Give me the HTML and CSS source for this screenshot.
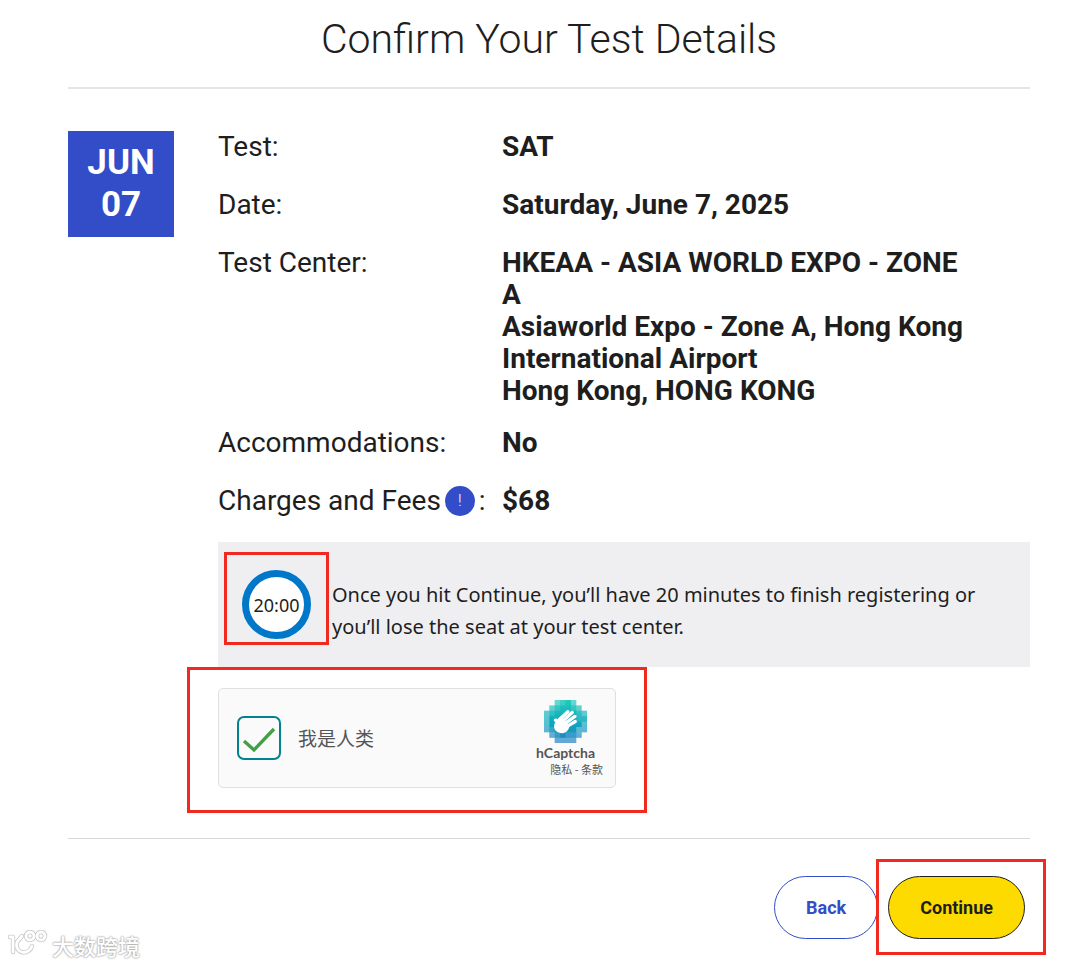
FILE: index.html
```html
<!DOCTYPE html>
<html lang="en">
<head>
<meta charset="utf-8">
<meta name="viewport" content="width=device-width, initial-scale=1">
<title>Confirm Your Test Details</title>
<link rel="stylesheet" href="styles.css">
</head>
<body>
<main class="page">
  <h1 class="title">Confirm Your Test Details</h1>
  <div class="summary">
    <div class="date"><span>JUN</span><span>07</span></div>
    <div class="content">
      <dl class="details">
        <div class="row"><dt>Test:</dt><dd>SAT</dd></div>
        <div class="row"><dt>Date:</dt><dd>Saturday, June 7, 2025</dd></div>
        <div class="row"><dt>Test Center:</dt><dd>HKEAA - ASIA WORLD EXPO - ZONE A<br>Asiaworld Expo - Zone A, Hong Kong International Airport<br>Hong Kong, HONG KONG</dd></div>
        <div class="row"><dt>Accommodations:</dt><dd>No</dd></div>
        <div class="row"><dt class="fees">Charges and Fees <button class="info" type="button" aria-label="About charges and fees">!</button> :</dt><dd>$68</dd></div>
      </dl>
      <div class="notice">
        <div class="timer"><span class="ring">20:00</span><span class="mark mark-timer"></span></div>
        <p class="notice-text">Once you hit Continue, you’ll have 20 minutes to finish registering or you’ll lose the seat at your test center.</p>
      </div>
      <div class="captcha">
        <label class="human">
          <span class="tick">
            <input class="tick-input" type="checkbox" checked>
            <svg class="tick-icon" viewBox="0 0 44 44" aria-hidden="true"><path d="M7 25l10 9L37 13" fill="none" stroke="#43a047" stroke-width="3.4"/></svg>
          </span>
          我是人类
        </label>
        <div class="brand">
          <svg class="brand-logo" viewBox="0 0 128 128" aria-hidden="true">
            <defs><linearGradient id="sea" x1="0" y1="0" x2="0" y2="1"><stop offset="0" stop-color="#22cbb9"/><stop offset=".5" stop-color="#10a9bd"/><stop offset="1" stop-color="#247fc5"/></linearGradient></defs>
            <path fill="url(#sea)" d="M32 0h64v16h16v16h16v64h-16v16H96v16H32v-16H16V96H0V32h16V16h16z"/>
            <path fill="#fff" opacity=".3" d="M32 0h16v16H32zM80 0h16v16H80zM16 16h16v16H16zM96 16h16v16H96zM0 32h16v32H0zM112 32h16v16h-16zM0 64h16v32H0zM112 64h16v32h-16zM16 96h16v16H16zM96 80h16v32H96zM32 112h64v16H32z"/>
            <path fill="#fff" opacity=".12" d="M48 0h16v16H48zM32 16h16v16H32zM80 16h16v16H80zM16 32h16v16H16zM96 32h16v32H96zM16 80h16v16H16zM32 96h16v16H32zM64 96h32v16H64zM112 48h16v16h-16z"/>
            <g fill="none" stroke="#fff" stroke-width="10" stroke-linecap="round"><path d="M46 58L71 35"/><path d="M52 66L84 37"/><path d="M60 72L92 49"/><path d="M66 80L93 64"/><path d="M34 60c9 1 6 9 11 15"/></g>
            <path fill="#fff" d="M30 77c1-10 6-17 17-25l14 6 15 19c-2 13-10 22-22 22-15 0-25-9-24-22z"/>
          </svg>
          <span class="brand-name">hCaptcha</span>
          <span class="legal"><a href="#privacy">隐私</a> - <a href="#terms">条款</a></span>
        </div>
        <span class="mark mark-captcha"></span>
      </div>
    </div>
  </div>
  <div class="actions">
    <button class="button back" type="button">Back</button>
    <div class="next"><button class="button continue" type="button">Continue</button><span class="mark mark-continue"></span></div>
  </div>
</main>
<div class="watermark">
  <svg class="watermark-logo" viewBox="0 0 40 30" aria-hidden="true"><g fill="none" stroke-linecap="round" stroke-linejoin="round"><g stroke="#c8c8c8" stroke-width="4.4"><path d="M2 7h3v15M14 6l-5 6c-3 12 12 14 15 4"/><circle cx="22" cy="6" r="4"/><circle cx="33" cy="6" r="4"/></g><g stroke="#fff" stroke-width="2.8"><path d="M2 7h3v15M14 6l-5 6c-3 12 12 14 15 4"/><circle cx="22" cy="6" r="4"/><circle cx="33" cy="6" r="4"/></g></g></svg>
  <span>大数跨境</span>
</div>
</body>
</html>
```
FILE: styles.css
```css
* { box-sizing: border-box; }
body {
  margin: 0;
  background: #fff;
  color: #1e1e1e;
  font-family: Roboto, "Noto Sans CJK SC", sans-serif;
  font-size: 28px;
  line-height: 32px;
}
.page { padding: 12px 50px 24px 68px; }
.title {
  margin: 0;
  padding-bottom: 20px;
  border-bottom: 2px solid #e5e5e5;
  font-size: 41px;
  font-weight: 300;
  line-height: 55px;
  text-align: center;
}
.summary {
  display: flex;
  align-items: flex-start;
  gap: 44px;
  padding: 42px 0 50px;
  border-bottom: 1px solid #d8d8d8;
}
.date {
  display: flex;
  flex: none;
  flex-direction: column;
  justify-content: center;
  width: 106px;
  height: 106px;
  background: #324dc7;
  color: #fff;
  font-size: 35px;
  font-weight: 700;
  line-height: 42px;
  text-align: center;
}
.content { flex: 1; min-width: 0; }
.details {
  display: flex;
  flex-direction: column;
  gap: 20px;
  margin: 0 0 19px;
}
.row {
  display: grid;
  grid-template-columns: 284px minmax(0, 466px);
  min-height: 38px;
}
dd { margin: 0; font-weight: 700; }
.fees { display: flex; align-items: center; gap: 4px; height: 32px; }
.info {
  width: 30px;
  height: 30px;
  padding: 0;
  border: 0;
  border-radius: 50%;
  background: #324dc7;
  color: #fff;
  font: 300 16px/30px Roboto, sans-serif;
}
.notice {
  display: flex;
  align-items: center;
  min-height: 125px;
  padding: 0 24px;
  background: #efeff2;
}
.timer { position: relative; flex: none; width: 90px; }
.ring {
  display: flex;
  align-items: center;
  justify-content: center;
  width: 69px;
  height: 69px;
  border: 7px solid #0077c8;
  border-radius: 50%;
  background: #fff;
  font: 18px/24px "Noto Sans", sans-serif;
}
.notice-text {
  margin: 0;
  padding-top: 12px;
  font-family: "Noto Sans", sans-serif;
  font-size: 20px;
}
.mark {
  position: absolute;
  border: 3px solid #f02a20;
  pointer-events: none;
}
.mark-timer { inset: -18px 3px -6px -18px; }
.captcha {
  position: relative;
  display: flex;
  align-items: center;
  justify-content: space-between;
  width: 398px;
  height: 100px;
  margin-top: 21px;
  padding: 0 12px 0 18px;
  border: 1px solid #e0e0e0;
  border-radius: 5px;
  background: #fafafa;
}
.mark-captcha { inset: -22px -32px -26px -32px; }
.human {
  display: flex;
  align-items: center;
  gap: 17px;
  color: #555;
  font-family: "Noto Sans CJK SC", sans-serif;
  font-size: 19px;
}
.tick { position: relative; width: 44px; height: 44px; }
.tick-input {
  width: 44px;
  height: 44px;
  margin: 0;
  appearance: none;
  border: 2px solid #00838f;
  border-radius: 7px;
  background: #fafafa;
  vertical-align: top;
}
.tick-icon { position: absolute; inset: 0; }
.brand {
  display: flex;
  flex-direction: column;
  align-items: flex-end;
  color: #555;
}
.brand-logo { width: 43px; height: 43px; margin-right: 16px; }
.brand-name {
  margin-right: 8px;
  font: 700 14px/20px Lato, sans-serif;
}
.legal { font: 11px/13px "Noto Sans CJK SC", sans-serif; }
.legal a { color: inherit; text-decoration: none; }
.actions {
  display: flex;
  justify-content: flex-end;
  gap: 10px;
  padding: 37px 5px 0 0;
}
.next { position: relative; }
.button {
  height: 63px;
  padding: 0 31px;
  border: 1px solid #324dc7;
  border-radius: 32px;
  background: #fff;
  color: #324dc7;
  font: 700 18px/24px Roboto, sans-serif;
}
.continue { border-color: #1e1e1e; background: #fedb00; color: #1e1e1e; }
.mark-continue { inset: -17px -21px -16px -12px; }
.watermark {
  position: absolute;
  bottom: 4px;
  left: 8px;
  display: flex;
  align-items: center;
  gap: 4px;
  color: #fff;
  font: 500 22px/30px "Noto Sans CJK SC", sans-serif;
  text-shadow: 0 0 2px #999, 0 0 2px #aaa;
}
.watermark-logo { width: 40px; height: 30px; }
```
